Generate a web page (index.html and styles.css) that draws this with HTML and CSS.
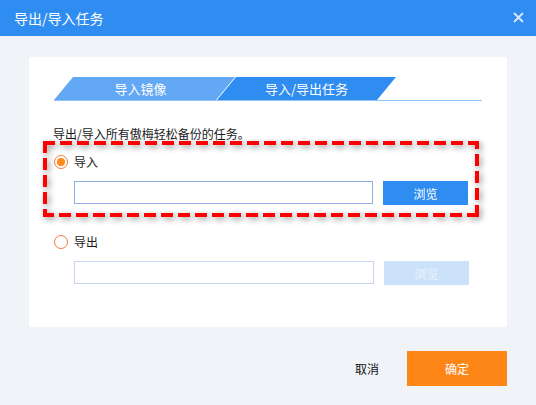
FILE: index.html
```html
<!DOCTYPE html>
<html lang="zh-CN">
<head>
    <meta charset="UTF-8">
    <title>导出/导入任务</title>
    <link rel="stylesheet" href="styles.css">
</head>
<body>
<div class="dialog">
    <div class="title-bar">
        <span class="title">导出/导入任务</span>
        <svg class="close" width="11" height="11" viewBox="0 0 11 11">
            <path d="M1 1 L10 10 M10 1 L1 10" stroke="#dce9fb" stroke-width="1.8" fill="none"/>
        </svg>
    </div>
    <div class="main">
        <div class="panel">
            <div class="tabs">
                <div class="tab tab-inactive">导入镜像</div>
                <div class="tab tab-active">导入/导出任务</div>
            </div>
            <p class="desc">导出/导入所有傲梅轻松备份的任务。</p>
            <div class="group highlight">
                <div class="radio-row">
                    <span class="radio checked"></span>
                    <span>导入</span>
                </div>
                <div class="input-row">
                    <input type="text" class="path-input">
                    <button class="browse-button">浏览</button>
                </div>
            </div>
            <div class="group second">
                <div class="radio-row">
                    <span class="radio"></span>
                    <span>导出</span>
                </div>
                <div class="input-row">
                    <input type="text" class="path-input disabled">
                    <button class="browse-button disabled">浏览</button>
                </div>
            </div>
        </div>
        <div class="footer">
            <button class="cancel-button">取消</button>
            <button class="ok-button">确定</button>
        </div>
    </div>
</div>
</body>
</html>
```

FILE: styles.css
```css
body {
    margin: 0;
    padding: 0;
    font-family: "Noto Sans CJK SC", "Liberation Sans", sans-serif;
    background-color: #f0f4f9;
}
.dialog {
    width: 536px;
    height: 405px;
    background-color: #f0f4f9;
}
.title-bar {
    height: 36px;
    background-color: #2f8cf0;
    display: flex;
    align-items: center;
    justify-content: space-between;
    padding: 0 12px 0 14px;
}
.title {
    color: #fff;
    font-size: 14px;
    line-height: 16px;
}
.close {
    display: block;
    margin-bottom: 1px;
}
.main {
    padding: 21px 29px 0 29px;
}
.panel {
    background: #fff;
    height: 270px;
    box-sizing: border-box;
    padding: 20px 25px 0 25px;
}
.tabs {
    display: flex;
    height: 23px;
    border-bottom: 1px solid #92c3f8;
}
.tab {
    height: 23px;
    color: #fff;
    font-size: 13px;
    line-height: 23px;
    text-align: center;
    clip-path: polygon(19px 0, 100% 0, calc(100% - 19px) 100%, 0 100%);
}
.tab-inactive {
    width: 181px;
    background-color: #63a8f4;
    padding-right: 8px;
    box-sizing: border-box;
}
.tab-active {
    width: 179px;
    margin-left: -18px;
    background-color: #2f8cf0;
}
.desc {
    margin: 25px 0 0 -1px;
    font-size: 12px;
    line-height: 16px;
    color: #1a1a1a;
}
.group {
    font-size: 12px;
    color: #1a1a1a;
}
/* red dashed frame round the import option */
.highlight {
    position: relative;
    width: 436px;
    box-sizing: border-box;
    margin: -1px 0 0 -11px;
    padding: 13px 11px 12px 11px;
}
.highlight::before {
    content: "";
    position: absolute;
    inset: 0;
    pointer-events: none;
    background:
        repeating-linear-gradient(90deg, #ff0000 0 12px, transparent 12px 17px) top left / 100% 4px no-repeat,
        repeating-linear-gradient(270deg, #ff0000 0 12px, transparent 12px 17px) bottom right / 100% 4px no-repeat,
        repeating-linear-gradient(180deg, #ff0000 0 12px, transparent 12px 17px) top left / 4px 100% no-repeat,
        repeating-linear-gradient(0deg, #ff0000 0 12px, transparent 12px 17px) bottom right / 4px 100% no-repeat;
    filter: drop-shadow(2px 2px 3px rgba(0, 0, 0, 0.45));
}
.second {
    margin-top: 17px;
}
.radio-row {
    display: flex;
    align-items: center;
    gap: 6px;
    height: 16px;
    line-height: 16px;
}
.radio {
    width: 14px;
    height: 14px;
    box-sizing: border-box;
    border: 1px solid #f07a3a;
    border-radius: 50%;
    display: flex;
    align-items: center;
    justify-content: center;
}
.radio.checked::after {
    content: "";
    width: 8px;
    height: 8px;
    border-radius: 50%;
    background-color: #ff8a1c;
}
.input-row {
    display: flex;
    align-items: flex-start;
    gap: 10px;
    margin-top: 11px;
    padding-left: 20px;
}
.path-input {
    width: 300px;
    height: 23px;
    box-sizing: border-box;
    margin: 0;
    border: 1px solid #8fb0de;
    padding: 0 4px;
    outline: none;
}
.path-input.disabled {
    border-color: #c6d6ec;
}
.browse-button {
    width: 85px;
    height: 24px;
    margin: 0;
    border: none;
    background-color: #2f8cf0;
    color: #fff;
    font-family: inherit;
    font-size: 12px;
    cursor: pointer;
}
.browse-button.disabled {
    background-color: #cce2fa;
    color: #e9f2fd;
    cursor: default;
}
.footer {
    display: flex;
    justify-content: flex-end;
    align-items: center;
    gap: 10px;
    padding-top: 24px;
}
.cancel-button {
    width: 60px;
    height: 35px;
    border: none;
    background: none;
    font-family: inherit;
    font-size: 12px;
    color: #111;
    cursor: pointer;
}
.ok-button {
    width: 100px;
    height: 35px;
    border: none;
    background-color: #fe8617;
    color: #fff;
    font-family: inherit;
    font-size: 12px;
    cursor: pointer;
}
```
